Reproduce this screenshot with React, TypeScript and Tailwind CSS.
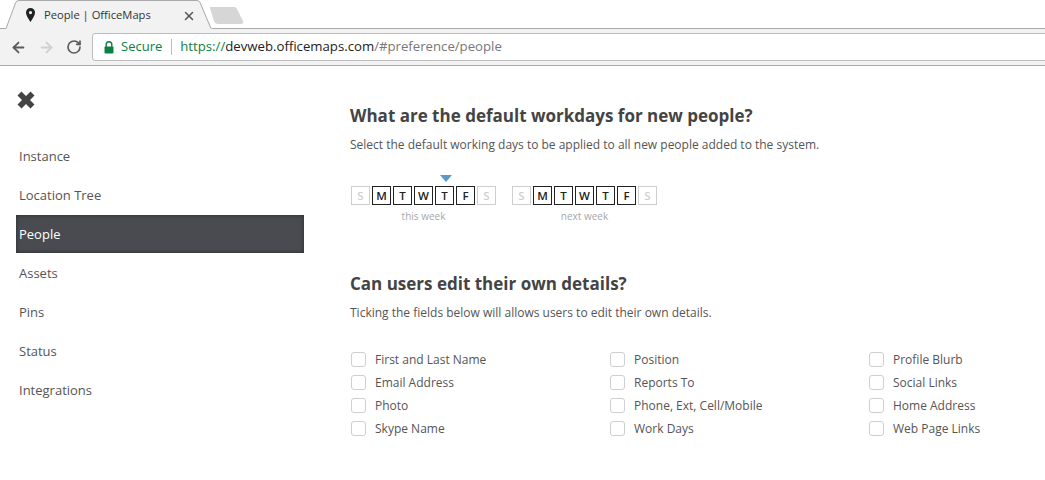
import { ArrowLeft, ArrowRight, RotateCw, X } from 'lucide-react'

const navItems = ['Instance', 'Location Tree', 'People', 'Assets', 'Pins', 'Status', 'Integrations']
const fieldColumns = [
  { width: 'w-[259px]', fields: ['First and Last Name', 'Email Address', 'Photo', 'Skype Name'] },
  { width: 'w-[259px]', fields: ['Position', 'Reports To', 'Phone, Ext, Cell/Mobile', 'Work Days'] },
  { width: 'w-[175px]', fields: ['Profile Blurb', 'Social Links', 'Home Address', 'Web Page Links'] },
]
const days = ['S', 'M', 'T', 'W', 'T', 'F', 'S']

function Week({ label, marker }: { label: string; marker?: boolean }) {
  return (
    <div className="relative flex flex-col items-center">
      {marker && (
        <svg className="absolute left-[89px] top-[-11px] w-[12px] h-[7px]" viewBox="0 0 12 7">
          <path d="M0 0h12L6 7z" fill="#5b9ac6" />
        </svg>
      )}
      <div className="flex gap-[2px]">
        {days.map((day, i) => {
          const off = i === 0 || i === 6
          return (
            <div
              key={i}
              className={`w-[19px] h-[19px] border flex items-center justify-center text-[11.5px] font-semibold ${
                off ? 'border-[#cfcfcf] text-[#cfcfcf] font-normal' : 'border-[#222] text-[#222]'
              }`}
            >
              {day}
            </div>
          )
        })}
      </div>
      <div className="mt-[4px] text-[10px] leading-[14px] text-[#a6a8ac]">{label}</div>
    </div>
  )
}

export default function App() {
  return (
    <div className="w-[1045px] h-[480px] overflow-hidden bg-white font-['Open_Sans',sans-serif] text-[#444]">
      {/* Browser chrome */}
      <div className="relative h-[66px]">
        <div className="h-[28px]" />
        <div className="h-[38px] bg-[#f2f2f2] border-y border-[#a9a9a9] flex items-center pl-[10px]">
          <ArrowLeft className="w-[17px] h-[17px] text-[#5a5a5a]" strokeWidth={2.5} />
          <ArrowRight className="w-[17px] h-[17px] ml-[11px] text-[#d0d0d0]" strokeWidth={2.5} />
          <RotateCw className="w-[16px] h-[16px] ml-[11px] text-[#5a5a5a]" strokeWidth={2.5} />
          <div className="ml-[10px] flex-1 mr-[-10px] h-[28px] bg-white border border-[#bdbdbd] rounded-[3px] flex items-center pl-[11px] text-[13.2px]">
            <svg className="w-[10px] h-[13px]" viewBox="0 0 10 13">
              <path d="M2.2 6V3.6a2.8 2.8 0 0 1 5.6 0V6" fill="none" stroke="#0b8043" strokeWidth="1.4" />
              <rect x="0.5" y="5.5" width="9" height="7" rx="1" fill="#0b8043" />
            </svg>
            <span className="ml-[7px] text-[#0b8043] text-[13px]">Secure</span>
            <span className="ml-[9px] w-px h-[16px] bg-[#bdbdbd]" />
            <span className="ml-[8px]">
              <span className="text-[#0b8043]">https://</span>
              <span className="text-[#222]">devweb.officemaps.com</span>
              <span className="text-[#777]">/#preference/people</span>
            </span>
          </div>
        </div>

        {/* Tab and new tab button sit over the toolbar line */}
        <svg className="absolute left-0 top-0 w-[250px] h-[30px]" viewBox="0 0 250 30">
          <path d="M6 28.5 L16 2 Q17 0.5 19 0.5 H197 Q199 0.5 200 2 L212 29 V30 H5z" fill="#f2f2f2" />
          <path d="M0 28.5 H6 L15.5 3 Q16.5 0.5 19 0.5 H197 Q199 0.5 200 2.5 L211 28.5" fill="none" stroke="#a9a9a9" />
          <path d="M210 8 Q209 7 211 7 H234 Q236 7 237 9 L243 21 Q244 24 241 24 H218 Q215 24 214 21z" fill="#d6d6d6" />
        </svg>
        <div className="absolute left-[26px] top-[7px] flex items-center text-[11.2px] text-[#333]">
          <svg className="w-[9px] h-[14px]" viewBox="0 0 9 14">
            <path
              fillRule="evenodd"
              d="M4.5 0A4.5 4.5 0 0 0 0 4.6C0 8 4.5 14 4.5 14S9 8 9 4.6A4.5 4.5 0 0 0 4.5 0zm0 3a1.6 1.6 0 1 1 0 3.2 1.6 1.6 0 0 1 0-3.2z"
              fill="#222"
            />
          </svg>
          <span className="ml-[9px]">People | OfficeMaps</span>
        </div>
        <X className="absolute left-[182px] top-[9px] w-[14px] h-[14px] text-[#555]" strokeWidth={2.5} />
      </div>

      <div className="flex">
        {/* Sidebar */}
        <aside className="w-[350px] pl-[16px] shrink-0">
          <svg className="mt-[25px] ml-[1px] w-[18px] h-[18px] block" viewBox="0 0 18 18">
            <path d="M0.5 4.5l4-4 4.5 4.5 4.5-4.5 4 4-4.5 4.5 4.5 4.5-4 4-4.5-4.5-4.5 4.5-4-4 4.5-4.5z" fill="#444" />
          </svg>
          <nav className="mt-[28px] w-[288px]">
            {navItems.map((item) => (
              <div
                key={item}
                className={`flex items-center pl-[3px] text-[13px] ${
                  item === 'People'
                    ? 'bg-[#4a4b50] text-white h-[38px] pt-[2px] mb-px shadow-[inset_0_0_4px_#2c2c30]'
                    : 'h-[39px] text-[#555]'
                }`}
              >
                {item}
              </div>
            ))}
          </nav>
        </aside>

        {/* Main */}
        <main className="flex-1">
          <h2 className="mt-[38px] text-[17px] leading-[24px] font-bold text-[#444]">What are the default workdays for new people?</h2>
          <p className="mt-[9px] text-[12px] leading-[16px] text-[#555]">Select the default working days to be applied to all new people added to the system.</p>

          <div className="mt-[33px] ml-[1px] flex gap-[16px]">
            <Week label="this week" marker />
            <Week label="next week" />
          </div>

          <h2 className="mt-[49px] text-[17px] leading-[24px] font-bold text-[#444]">Can users edit their own details?</h2>
          <p className="mt-[9px] text-[12px] leading-[16px] text-[#555]">Ticking the fields below will allows users to edit their own details.</p>

          <div className="mt-[31px] ml-[1px] flex">
            {fieldColumns.map((col, i) => (
              <div key={i} className={`${col.width} shrink-0 flex flex-col gap-[8px]`}>
                {col.fields.map((field) => (
                  <div key={field} className="h-[15px] flex items-center">
                    <span className="w-[15px] h-[15px] border border-[#cfcfcf] rounded-[3px] shrink-0" />
                    <span className="ml-[9px] text-[12px] text-[#555] whitespace-nowrap">{field}</span>
                  </div>
                ))}
              </div>
            ))}
          </div>
        </main>
      </div>
    </div>
  )
}
